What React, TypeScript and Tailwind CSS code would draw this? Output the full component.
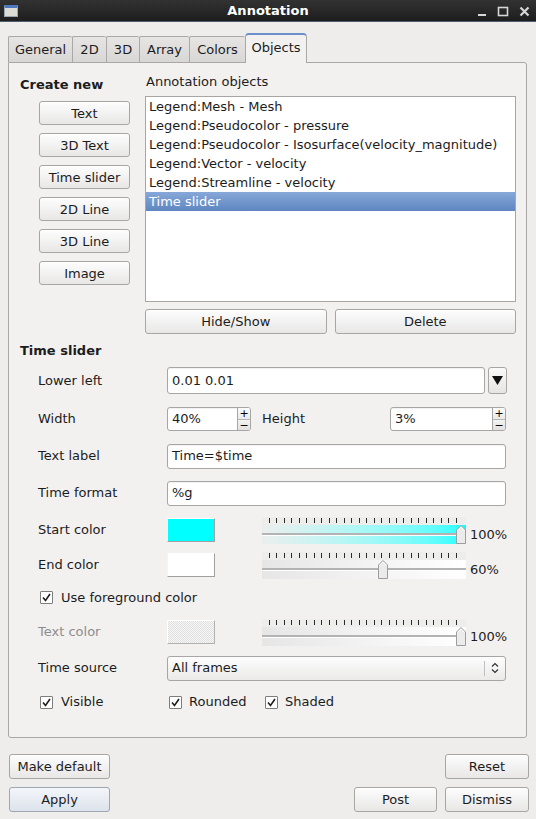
import React from "react";

function Btn({ children, className = "" }: { children: React.ReactNode; className?: string }) {
  return (
    <div
      className={`flex items-center justify-center rounded-[3px] border border-[#a8a6a4] bg-linear-to-b from-[#fdfdfd] to-[#e8e7e6] text-[13px] text-[#1c1c1c] shadow-[inset_0_1px_0_rgba(255,255,255,0.9)] ${className}`}
    >
      {children}
    </div>
  );
}

function Check() {
  return (
    <div className="w-[13px] h-[13px] border border-[#7d7d7d] bg-white flex items-center justify-center rounded-[1px] shrink-0">
      <svg width="11" height="11" viewBox="0 0 11 11">
        <path d="M2 5.5 L4.5 8.5 L9 2" fill="none" stroke="#1e1e1e" strokeWidth="1.6" />
      </svg>
    </div>
  );
}

function Slider({ pct, bodyClass }: { pct: number; bodyClass: string }) {
  const ticks = Array.from({ length: 26 });
  return (
    <div className="w-[204px] flex flex-col">
      <div className="h-[8px] flex justify-between pl-[7px] pr-[9px] bg-[#ededec]">
        {ticks.map((_, i) => (
          <div key={i} className="w-px h-[5px] mt-[1px] bg-[#2b2b2b]" />
        ))}
      </div>
      <div className={`relative h-[19px] flex flex-col pt-[8px] ${bodyClass}`}>
        <div className="h-[2px] bg-[#b3b3b3]" />
        <div className="h-px bg-white" />
        <svg
          className="absolute top-0"
          style={{ left: `${(pct * 194) / 100}px` }}
          width="10"
          height="19"
          viewBox="0 0 10 19"
        >
          <path d="M0.5 5 L5 0.5 L9.5 5 L9.5 18.5 L0.5 18.5 Z" fill="#ebebeb" stroke="#9d9d9d" />
          <path d="M1.5 5.5 L5 2 L8.5 5.5" fill="none" stroke="#ffffff" />
        </svg>
      </div>
    </div>
  );
}

function Spin({ value, w }: { value: string; w: string }) {
  return (
    <div className={`flex h-[24px] rounded-[3px] border border-[#a8a6a4] bg-white overflow-hidden shadow-[inset_0_1px_1px_rgba(0,0,0,0.06)] ${w}`}>
      <div className="flex-1 flex items-center pl-[4px] text-[13px] text-[#1c1c1c]">{value}</div>
      <div className="w-[13px] flex flex-col border-l border-[#a8a6a4]">
        <div className="flex-1 flex items-center justify-center bg-linear-to-b from-[#fbfbfb] to-[#ebeae9] border-b border-[#b8b6b4] text-[11px] leading-none text-black">+</div>
        <div className="flex-1 flex items-center justify-center bg-linear-to-b from-[#f3f3f2] to-[#e0dfde] text-[11px] leading-none text-black">−</div>
      </div>
    </div>
  );
}

function Input({ value, className = "" }: { value: string; className?: string }) {
  return (
    <div
      className={`flex items-center pl-[4px] rounded-[3px] border border-[#a8a6a4] bg-white text-[13px] text-[#1c1c1c] shadow-[inset_0_1px_1px_rgba(0,0,0,0.06)] ${className}`}
    >
      {value}
    </div>
  );
}

function Row({ h, label, disabled = false, children }: { h: string; label?: string; disabled?: boolean; children?: React.ReactNode }) {
  return (
    <div className={`flex items-center ${h}`}>
      {label !== undefined && (
        <div className={`w-[129px] shrink-0 text-[13px] ${disabled ? "text-[#8e8d8c]" : "text-[#1c1c1c]"}`}>{label}</div>
      )}
      {children}
    </div>
  );
}

export default function App() {
  const items = [
    "Legend:Mesh - Mesh",
    "Legend:Pseudocolor - pressure",
    "Legend:Pseudocolor - Isosurface(velocity_magnitude)",
    "Legend:Vector - velocity",
    "Legend:Streamline - velocity",
  ];
  return (
    <div className="w-[536px] h-[819px] overflow-hidden bg-[#eeedeb] flex flex-col font-['DejaVu_Sans','Noto_Sans',sans-serif] text-[#1c1c1c]">
      {/* Title bar */}
      <div className="h-[22px] shrink-0 flex items-center bg-linear-to-b from-[#323232] to-[#1e1e1e] border-b border-[#4f5d70]">
        <div className="w-[80px] pl-[4px] flex items-center">
          <div className="w-[14px] h-[12px] border border-[#9aa6b6] border-t-[3px] border-t-[#4d78bd] bg-[#dcdcd6]" />
        </div>
        <div className="flex-1 text-center text-white font-bold text-[13px] leading-none">Annotation</div>
        <div className="w-[80px] flex items-center justify-end pr-[6px] gap-[10px]">
          <svg width="10" height="12" viewBox="0 0 10 12">
            <rect x="1" y="9" width="8" height="2" fill="#d6d6d6" />
          </svg>
          <svg width="12" height="12" viewBox="0 0 12 12">
            <rect x="1.5" y="2.5" width="9" height="8" fill="none" stroke="#d6d6d6" strokeWidth="1.6" />
          </svg>
          <svg width="11" height="12" viewBox="0 0 11 12">
            <path d="M1.5 2.5 L9.5 10.5 M9.5 2.5 L1.5 10.5" stroke="#d6d6d6" strokeWidth="2.2" />
          </svg>
        </div>
      </div>

      {/* Tabs */}
      <div className="mt-[11px] h-[29px] flex items-end pl-[8px] shrink-0">
        {[
          ["General", "w-[64px]"],
          ["2D", "w-[34px]"],
          ["3D", "w-[33px]"],
          ["Array", "w-[50px]"],
          ["Colors", "w-[56px]"],
        ].map(([t, w]) => (
          <div
            key={t}
            className={`h-[26px] ${w} flex items-center justify-center border-t border-l border-[#aaa8a6] rounded-t-[2px] bg-linear-to-b from-[#e6e5e4] to-[#d8d7d6] text-[13px] text-[#1c1c1c]`}
          >
            {t}
          </div>
        ))}
        <div className="relative z-10 -mb-px h-[30px] w-[62px] flex items-center justify-center pb-[3px] border-x border-[#aaa8a6] border-t-2 border-t-[#6c90cc] rounded-t-[4px] bg-[#f2f1f0] text-[13px] text-[#1c1c1c]">
          Objects
        </div>
      </div>

      {/* Panel */}
      <div className="ml-[8px] w-[519px] h-[676px] shrink-0 border border-[#aaa8a6] rounded-[3px] rounded-tl-none bg-[#f2f1f0] flex flex-col">
        <div className="flex">
          <div className="w-[136px] pl-[11px] pt-[14px]">
            <div className="h-[16px] leading-[16px] text-[13px] font-bold">Create new</div>
            <div className="mt-[8px] ml-[19px] flex flex-col gap-[8px]">
              {["Text", "3D Text", "Time slider", "2D Line", "3D Line", "Image"].map((b) => (
                <Btn key={b} className="w-[91px] h-[24px] pt-px">
                  {b}
                </Btn>
              ))}
            </div>
          </div>
          <div className="w-[371px] pt-[11px]">
            <div className="h-[16px] leading-[16px] text-[13px] pl-px">Annotation objects</div>
            <div className="mt-[6px] h-[206px] border border-[#a8a6a4] bg-white flex flex-col">
              {items.map((it) => (
                <div key={it} className="h-[19px] flex items-center pl-[3px] text-[13px] text-[#1c1c1c] whitespace-nowrap">
                  {it}
                </div>
              ))}
              <div className="h-[19px] flex items-center pl-[3px] text-[13px] text-white bg-linear-to-b from-[#87a8d8] to-[#5f86c1]">
                Time slider
              </div>
            </div>
            <div className="mt-[7px] h-[25px] flex gap-[8px]">
              <Btn className="flex-1">Hide/Show</Btn>
              <Btn className="flex-1">Delete</Btn>
            </div>
          </div>
        </div>

        <div className="mt-[9px] pl-[11px] h-[16px] leading-[16px] text-[13px] font-bold">Time slider</div>

        <div className="mt-[2px] pl-[29px] flex flex-col">
          <Row h="h-[39px]" label="Lower left">
            <Input value="0.01 0.01" className="w-[318px] h-[27px]" />
            <div className="ml-[3px] w-[19px] h-[27px] rounded-[3px] border border-[#a8a6a4] bg-linear-to-b from-[#fafafa] to-[#e6e5e4] flex items-center justify-center">
              <svg width="11" height="11" viewBox="0 0 11 11">
                <path d="M0 1 L11 1 L5.5 10 Z" fill="#111" />
              </svg>
            </div>
          </Row>
          <Row h="h-[38px]" label="Width">
            <Spin value="40%" w="w-[84px]" />
            <div className="ml-[11px] w-[128px] text-[13px]">Height</div>
            <Spin value="3%" w="w-[116px]" />
          </Row>
          <Row h="h-[36px]" label="Text label">
            <Input value="Time=$time" className="w-[339px] h-[25px]" />
          </Row>
          <Row h="h-[38px]" label="Time format">
            <Input value="%g" className="w-[339px] h-[25px]" />
          </Row>
          <Row h="h-[36px]" label="Start color">
            <div className="w-[48px] h-[24px] bg-[#00ffff] border border-t-white border-l-white border-b-[#a0a0a0] border-r-[#a0a0a0]" />
            <div className="ml-[47px]">
              <Slider pct={100} bodyClass="bg-linear-to-r from-[#eceeee] to-[#00ffff]" />
            </div>
            <div className="ml-[4px] pt-[10px] text-[13px]">100%</div>
          </Row>
          <Row h="h-[34px]" label="End color">
            <div className="w-[48px] h-[24px] bg-white border border-t-white border-l-[#f4f4f4] border-b-[#a0a0a0] border-r-[#a0a0a0]" />
            <div className="ml-[47px]">
              <Slider pct={60} bodyClass="bg-linear-to-r from-[#e6e6e6] to-[#ffffff]" />
            </div>
            <div className="ml-[4px] pt-[10px] text-[13px]">60%</div>
          </Row>
          <Row h="h-[31px]">
            <div className="pl-[2px] flex items-center">
              <Check />
              <span className="ml-[8px] text-[13px]">Use foreground color</span>
            </div>
          </Row>
          <Row h="h-[38px]" label="Text color" disabled>
            <div className="w-[48px] h-[24px] bg-[repeating-conic-gradient(#e0e0e0_0_25%,#f6f6f6_0_50%)] bg-[length:2px_2px] border border-t-white border-l-white border-b-[#b0b0b0] border-r-[#b0b0b0]" />
            <div className="ml-[47px]">
              <Slider pct={100} bodyClass="bg-linear-to-r from-[#e6e6e6] to-[#ffffff]" />
            </div>
            <div className="ml-[4px] pt-[10px] text-[13px]">100%</div>
          </Row>
          <Row h="h-[34px]" label="Time source">
            <div className="w-[339px] h-[25px] flex items-center rounded-[3px] border border-[#a8a6a4] bg-linear-to-b from-[#fdfdfd] to-[#ebeae9] text-[13px]">
              <div className="flex-1 pl-[4px]">All frames</div>
              <div className="w-px h-[15px] bg-[#c2c0be]" />
              <div className="w-[20px] flex items-center justify-center">
                <svg width="8" height="12" viewBox="0 0 8 12">
                  <path d="M1 4.5 L4 1.5 L7 4.5 M1 7.5 L4 10.5 L7 7.5" fill="none" stroke="#333" strokeWidth="1.2" />
                </svg>
              </div>
            </div>
          </Row>
          <Row h="h-[34px]">
            <div className="pl-[2px] w-[131px] flex items-center">
              <Check />
              <span className="ml-[8px] text-[13px]">Visible</span>
            </div>
            <div className="w-[96px] flex items-center">
              <Check />
              <span className="ml-[7px] text-[13px]">Rounded</span>
            </div>
            <div className="flex items-center">
              <Check />
              <span className="ml-[7px] text-[13px]">Shaded</span>
            </div>
          </Row>
        </div>
      </div>

      {/* Bottom buttons */}
      <div className="mt-[16px] pl-[9px] pr-[7px] flex justify-between">
        <Btn className="w-[101px] h-[25px]">Make default</Btn>
        <Btn className="w-[84px] h-[25px]">Reset</Btn>
      </div>
      <div className="mt-[8px] pl-[9px] pr-[7px] flex justify-between">
        <div className="w-[101px] h-[25px] flex items-center justify-center rounded-[3px] border border-[#9ea6b3] bg-linear-to-b from-[#f3f5f9] to-[#dde3ec] text-[13px] text-[#1c1c1c]">
          Apply
        </div>
        <div className="flex gap-[8px]">
          <Btn className="w-[83px] h-[25px]">Post</Btn>
          <Btn className="w-[84px] h-[25px]">Dismiss</Btn>
        </div>
      </div>
    </div>
  );
}
